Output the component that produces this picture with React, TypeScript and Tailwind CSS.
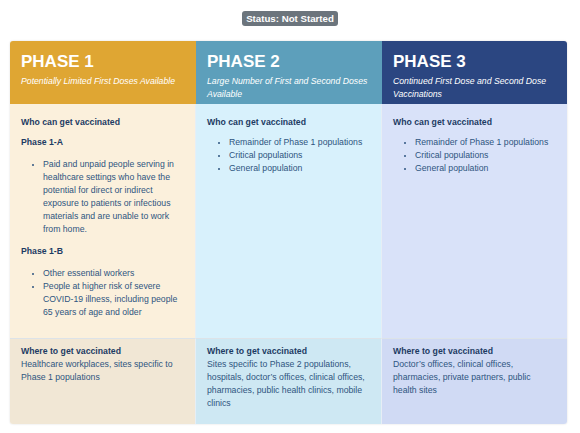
const phases = [
  {
    title: "PHASE 1",
    subtitle: "Potentially Limited First Doses Available",
    head: "bg-[#dfa633]",
    body: "bg-[#fbf0dc]",
    foot: "bg-[#f1e7d5]",
    groups: [
      {
        label: "Phase 1-A",
        items: [
          "Paid and unpaid people serving in healthcare settings who have the potential for direct or indirect exposure to patients or infectious materials and are unable to work from home.",
        ],
      },
      {
        label: "Phase 1-B",
        items: [
          "Other essential workers",
          "People at higher risk of severe COVID-19 illness, including people 65 years of age and older",
        ],
      },
    ],
    where: "Healthcare workplaces, sites specific to Phase 1 populations",
  },
  {
    title: "PHASE 2",
    subtitle: "Large Number of First and Second Doses Available",
    head: "bg-[#5d9fbb]",
    body: "bg-[#d8f1fc]",
    foot: "bg-[#cee8f3]",
    groups: [
      {
        label: "",
        items: [
          "Remainder of Phase 1 populations",
          "Critical populations",
          "General population",
        ],
      },
    ],
    where:
      "Sites specific to Phase 2 populations, hospitals, doctor’s offices, clinical offices, pharmacies, public health clinics, mobile clinics",
  },
  {
    title: "PHASE 3",
    subtitle: "Continued First Dose and Second Dose Vaccinations",
    head: "bg-[#2b4681]",
    body: "bg-[#d9e2f9]",
    foot: "bg-[#d0daf4]",
    groups: [
      {
        label: "",
        items: [
          "Remainder of Phase 1 populations",
          "Critical populations",
          "General population",
        ],
      },
    ],
    where:
      "Doctor’s offices, clinical offices, pharmacies, private partners, public health sites",
  },
];

export default function App() {
  return (
    <div
      className="w-[580px] h-[433px] bg-white overflow-hidden"
      style={{ fontFamily: '"Liberation Sans", Arial, sans-serif' }}
    >
      <div className="flex justify-center pt-[11px]">
        <span className="bg-[#6c757d] text-white font-bold text-[9.7px] leading-[15px] px-[4px] rounded-[3px]">
          Status: Not Started
        </span>
      </div>

      <div className="ml-[10px] mt-[15px] w-[557px] grid grid-cols-[186px_186px_185px] grid-rows-[63px_234px_86px] rounded-[3px] overflow-hidden shadow-[0_0_2px_rgba(0,0,0,0.15)]">
        {phases.map((p) => (
          <div key={p.title + "h"} className={`${p.head} px-[11px] pt-[11px] text-white`}>
            <div className="text-[17px] leading-[20px] font-bold">{p.title}</div>
            <div className="mt-[3px] text-[8.7px] leading-[13px] italic">{p.subtitle}</div>
          </div>
        ))}

        {phases.map((p, i) => (
          <div
            key={p.title + "b"}
            className={`${p.body} px-[11px] pt-[12px] text-[8.7px] leading-[13px] text-[#2e5580] ${
              i < 2 ? "border-r border-[#e6eef5]" : ""
            }`}
          >
            <div className="font-bold text-[#1d3b63] mb-[7px]">Who can get vaccinated</div>
            {p.groups.map((g, j) => (
              <div key={j}>
                {g.label && (
                  <div className="font-bold text-[#1d3b63] mb-[9px]">{g.label}</div>
                )}
                <ul className="list-disc pl-[22px] mb-[9px] marker:text-[7px]">
                  {g.items.map((it) => (
                    <li key={it}>{it}</li>
                  ))}
                </ul>
              </div>
            ))}
          </div>
        ))}

        {phases.map((p, i) => (
          <div
            key={p.title + "f"}
            className={`${p.foot} px-[11px] pt-[6px] text-[8.7px] leading-[13px] text-[#2e5580] border-t border-[#dde3e8] ${
              i < 2 ? "border-r border-r-[#e6eef5]" : ""
            }`}
          >
            <div className="font-bold text-[#1d3b63]">Where to get vaccinated</div>
            <div>{p.where}</div>
          </div>
        ))}
      </div>
    </div>
  );
}
